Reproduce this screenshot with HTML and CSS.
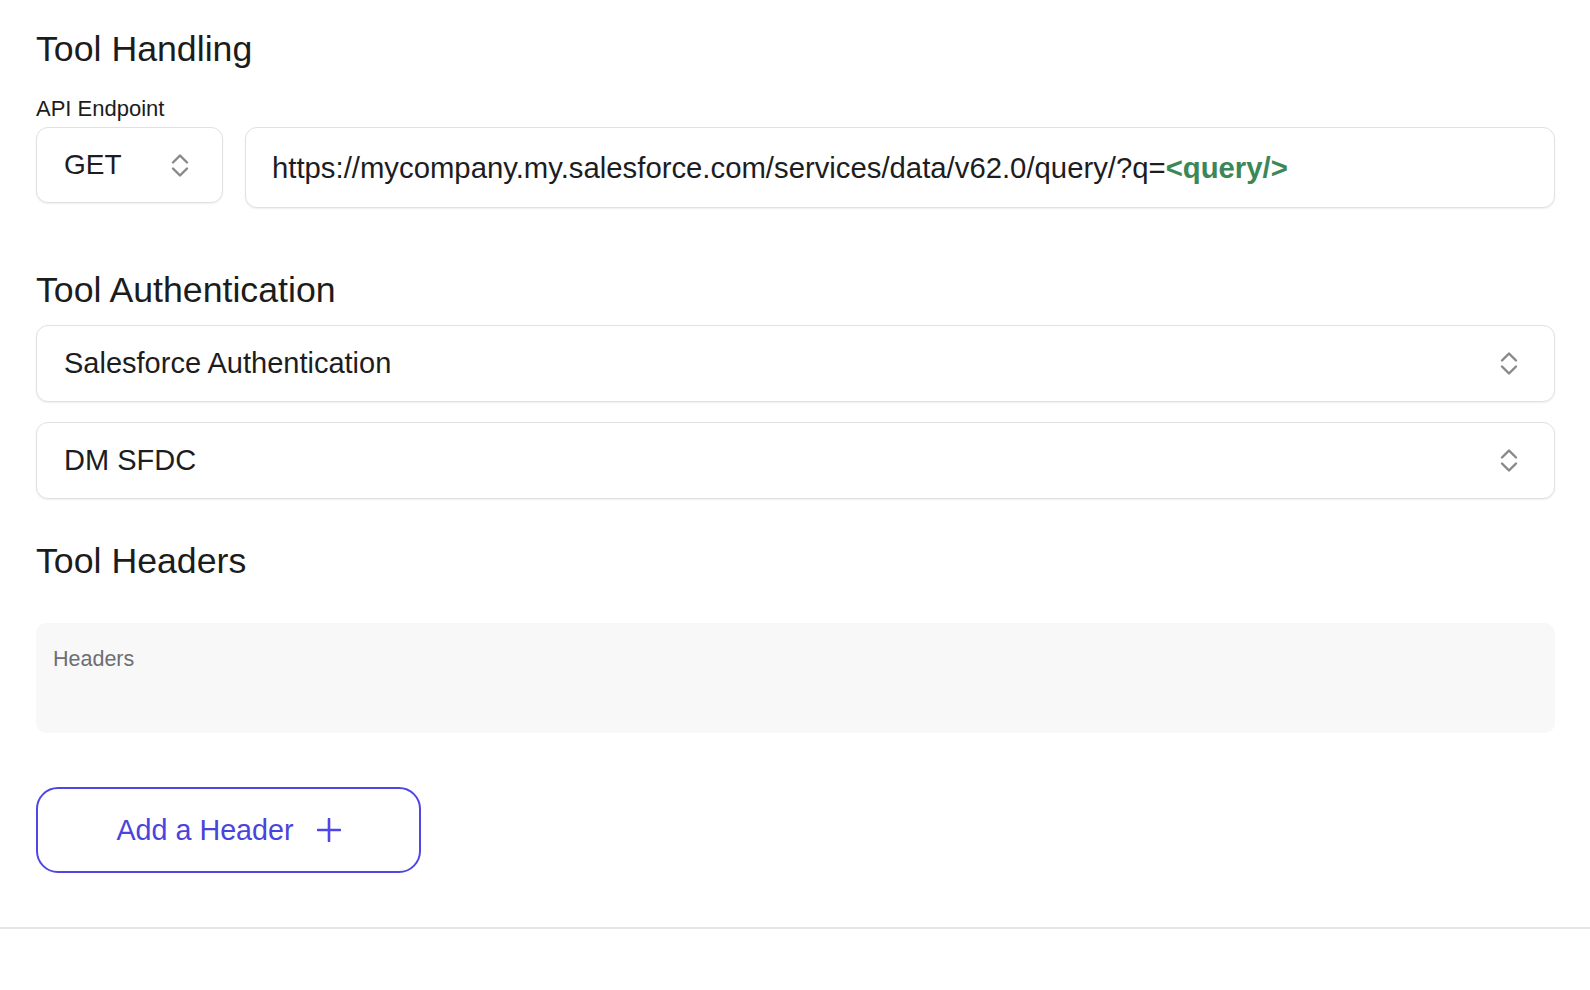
FILE: index.html
```html
<!DOCTYPE html>
<html lang="en">
<head>
<meta charset="utf-8">
<title>Tool Handling</title>
<link rel="stylesheet" href="styles.css">
</head>
<body>
<main class="page">
  <h2 class="section-title title-handling">Tool Handling</h2>
  <div class="field-label">API Endpoint</div>
  <div class="endpoint-row">
    <div class="method-select">
      <span class="method-value">GET</span>
      <svg class="chevrons" width="18" height="25" viewBox="0 0 18 25" aria-hidden="true">
        <path d="M2 9.5 L9 2.5 L16 9.5" />
        <path d="M2 15.5 L9 22.5 L16 15.5" />
      </svg>
    </div>
    <div class="url-input">
      <span class="url-text">https://mycompany.my.salesforce.com/services/data/v62.0/query/?q=</span><span class="url-var">&lt;query/&gt;</span>
    </div>
  </div>

  <h2 class="section-title title-auth">Tool Authentication</h2>
  <div class="select-box select-first">
    <span class="select-value">Salesforce Authentication</span>
    <svg class="chevrons" width="18" height="25" viewBox="0 0 18 25" aria-hidden="true">
      <path d="M2 9.5 L9 2.5 L16 9.5" />
      <path d="M2 15.5 L9 22.5 L16 15.5" />
    </svg>
  </div>
  <div class="select-box select-second">
    <span class="select-value">DM SFDC</span>
    <svg class="chevrons" width="18" height="25" viewBox="0 0 18 25" aria-hidden="true">
      <path d="M2 9.5 L9 2.5 L16 9.5" />
      <path d="M2 15.5 L9 22.5 L16 15.5" />
    </svg>
  </div>

  <h2 class="section-title title-headers">Tool Headers</h2>
  <div class="headers-box">
    <span class="headers-placeholder">Headers</span>
  </div>

  <button class="add-header" type="button">
    <span>Add a Header</span>
    <svg class="plus" width="24" height="24" viewBox="0 0 24 24" aria-hidden="true">
      <path d="M12 1 V23 M1 12 H23" />
    </svg>
  </button>
</main>
<div class="divider"></div>
</body>
</html>
```

FILE: styles.css
```css
html, body {
  margin: 0;
  padding: 0;
  background: #ffffff;
}

body {
  font-family: "Liberation Sans", Arial, Helvetica, sans-serif;
  color: #1d1d1f;
}

.page {
  padding: 29px 35px 0 36px;
  display: flex;
  flex-direction: column;
  align-items: stretch;
}

.section-title {
  margin: 0;
  font-size: 35.7px;
  line-height: 40px;
  font-weight: 400;
  color: #1c1c1c;
}

.field-label {
  margin-top: 27px;
  font-size: 22px;
  line-height: 26px;
  color: #1c1c1c;
}

.endpoint-row {
  margin-top: 5px;
  display: flex;
  align-items: flex-start;
  gap: 22px;
}

.method-select,
.url-input,
.select-box {
  box-sizing: border-box;
  display: flex;
  align-items: center;
  background: #ffffff;
  border: 1px solid #e1e1e1;
  border-radius: 12px;
  box-shadow: 0 1px 2px rgba(0, 0, 0, 0.07);
  font-size: 29px;
  color: #1d1d1f;
}

.method-select {
  width: 187px;
  height: 76px;
  padding: 0 33px 0 27px;
  justify-content: space-between;
  flex: none;
  font-size: 28px;
}

.url-input {
  flex: 1;
  height: 81px;
  padding: 0 26px;
  white-space: nowrap;
  font-size: 29.3px;
}

.url-var {
  color: #3c8757;
  font-weight: 700;
}

.chevrons {
  flex: none;
  fill: none;
  stroke: #888888;
  stroke-width: 2.4;
  stroke-linecap: round;
  stroke-linejoin: round;
}

.title-auth {
  margin-top: 62px;
}

.select-box {
  height: 77px;
  padding: 0 36px 0 27px;
  justify-content: space-between;
}

.select-first {
  margin-top: 15px;
}

.select-second {
  margin-top: 20px;
}

.title-headers {
  margin-top: 42px;
}

.headers-box {
  margin-top: 42px;
  height: 110px;
  box-sizing: border-box;
  padding: 23px 17px 0;
  background: #f8f8f8;
  border-radius: 10px;
}

.headers-placeholder {
  display: block;
  font-size: 21.5px;
  line-height: 26px;
  color: #6e6e73;
}

.add-header {
  margin-top: 54px;
  align-self: flex-start;
  box-sizing: border-box;
  width: 385px;
  height: 86px;
  display: flex;
  align-items: center;
  justify-content: center;
  gap: 23px;
  padding: 0;
  background: #ffffff;
  border: 2px solid #4f46e5;
  border-radius: 22px;
  font-family: "Liberation Sans", Arial, Helvetica, sans-serif;
  font-size: 28.7px;
  color: #4a44dc;
  cursor: pointer;
}

.plus {
  flex: none;
  fill: none;
  stroke: #4f46e5;
  stroke-width: 2.6;
  stroke-linecap: round;
}

.divider {
  margin-top: 54px;
  height: 2px;
  background: #e6e6e6;
}
```
